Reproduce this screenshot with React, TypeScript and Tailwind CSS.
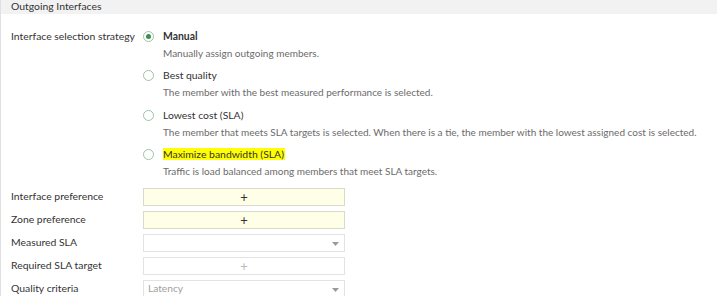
const options = [
  { label: 'Manual', desc: 'Manually assign outgoing members.', checked: true },
  { label: 'Best quality', desc: 'The member with the best measured performance is selected.' },
  {
    label: 'Lowest cost (SLA)',
    desc: 'The member that meets SLA targets is selected. When there is a tie, the member with the lowest assigned cost is selected.',
  },
  { label: 'Maximize bandwidth (SLA)', desc: 'Traffic is load balanced among members that meet SLA targets.', highlight: true },
];

const rows = [
  { label: 'Interface preference', kind: 'plus', yellow: true },
  { label: 'Zone preference', kind: 'plus', yellow: true },
  { label: 'Measured SLA', kind: 'select' },
  { label: 'Required SLA target', kind: 'plusGray' },
  { label: 'Quality criteria', kind: 'select', value: 'Latency' },
];

const Caret = () => (
  <svg width="7" height="4" viewBox="0 0 7 4" className="absolute right-[5px] top-[7px]">
    <path d="M0 0 L7 0 L3.5 4 Z" fill="#9a9a9a" />
  </svg>
);

const App = () => {
  return (
    <div className="w-[719px] h-[296px] overflow-hidden bg-white border-l border-[#e0e0e0] text-[10.4px] text-[#333] font-['Lato','Liberation_Sans',sans-serif]">
      <div className="h-[14px] mr-[2px] bg-[#f2f2f2] pl-[10px] leading-[12px]">Outgoing Interfaces</div>

      <div className="flex mt-[15px]">
        <div className="w-[142px] pl-[10px] leading-[14px] whitespace-nowrap">Interface selection strategy</div>
        <div className="flex flex-col gap-[8px]">
          {options.map((o, i) => (
            <div key={o.label} className={`flex ${i > 1 ? 'mt-[0.5px]' : ''}`}>
              <div className="w-[11px] h-[11px] mt-[2px] mr-[9px] rounded-full border border-[#9cc4a5] flex items-center justify-center">
                {o.checked && <div className="w-[5px] h-[5px] rounded-full bg-[#3a8f52]" />}
              </div>
              <div className="flex flex-col">
                <span className={`h-[14px] leading-[14px] ${o.checked ? 'font-bold' : ''}`}>
                  <span className={o.highlight ? 'bg-[#ffff00] pr-[1px]' : ''}>{o.label}</span>
                </span>
                <span className="mt-[3px] h-[14px] text-[10px] leading-[14px] text-[#6b6b6b] whitespace-nowrap">{o.desc}</span>
              </div>
            </div>
          ))}
        </div>
      </div>

      <div className="flex flex-col gap-[5px] mt-[10px]">
        {rows.map((r) => (
          <div key={r.label} className="flex items-center h-[18px]">
            <div className="w-[142px] pl-[10px]">{r.label}</div>
            <div
              className={`relative w-[202px] h-[18px] border ${
                r.yellow ? 'bg-[#ffffe8] border-[#d9d9cc]' : 'bg-white border-[#e3e3e3]'
              } flex items-center`}
            >
              {r.kind === 'plus' && <span className="w-full text-center text-[13px] leading-[13px] text-[#333]">+</span>}
              {r.kind === 'plusGray' && <span className="w-full text-center text-[13px] leading-[13px] text-[#bbb]">+</span>}
              {r.kind === 'select' && (
                <>
                  {r.value && <span className="pl-[4px] text-[10.2px] text-[#a0a0a0]">{r.value}</span>}
                  <Caret />
                </>
              )}
            </div>
          </div>
        ))}
      </div>
    </div>
  );
};

export default App;
